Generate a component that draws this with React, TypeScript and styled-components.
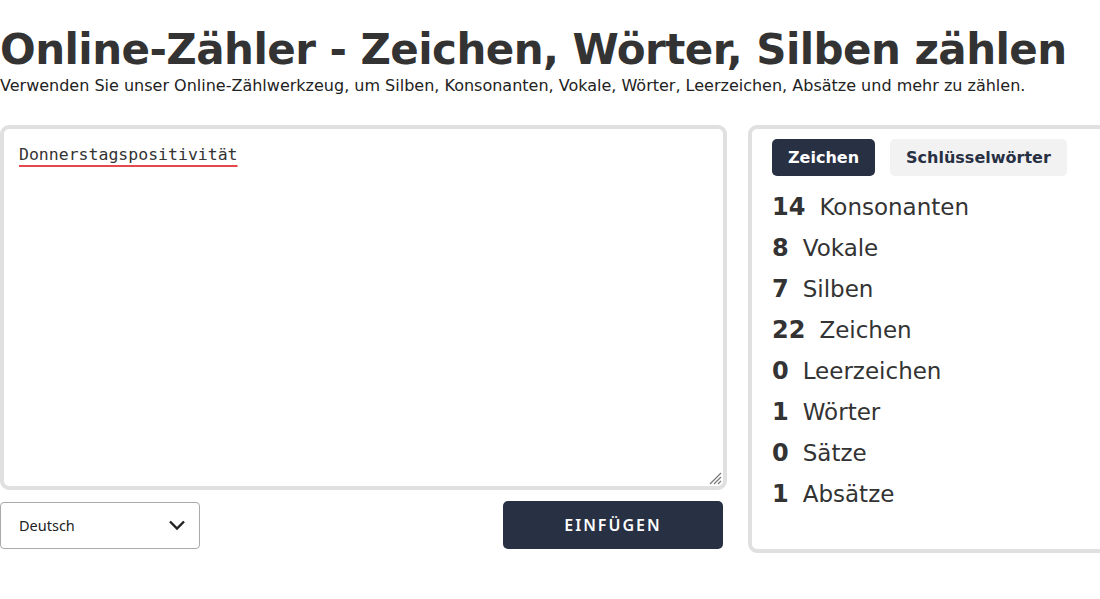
import React from "react";
import styled, { createGlobalStyle } from "styled-components";

const GlobalStyle = createGlobalStyle`
  html, body {
    margin: 0;
    padding: 0;
    background: #fff;
    overflow: hidden;
  }
  body {
    font-family: "DejaVu Sans", sans-serif;
    color: #333;
  }
`;

const stats = [
  { value: 14, label: "Konsonanten" },
  { value: 8, label: "Vokale" },
  { value: 7, label: "Silben" },
  { value: 22, label: "Zeichen" },
  { value: 0, label: "Leerzeichen" },
  { value: 1, label: "Wörter" },
  { value: 0, label: "Sätze" },
  { value: 1, label: "Absätze" },
];

const App = () => {
  return (
    <>
      <GlobalStyle />
      <Page>
        <Header>
          <Title>Online-Zähler - Zeichen, Wörter, Silben zählen</Title>
          <Subtitle>
            Verwenden Sie unser Online-Zählwerkzeug, um Silben, Konsonanten, Vokale, Wörter,
            Leerzeichen, Absätze und mehr zu zählen.
          </Subtitle>
        </Header>
        <Main>
          <LeftColumn>
            <Editor>
              <EditorText>Donnerstagspositivität</EditorText>
              <ResizeHandle viewBox="0 0 16 16">
                <path d="M15 4 L4 15 M15 8 L8 15 M15 12 L12 15" stroke="#777" strokeWidth="1.2" />
              </ResizeHandle>
            </Editor>
            <Controls>
              <Select>
                <span>Deutsch</span>
                <svg width="20" height="20" viewBox="0 0 20 20">
                  <path d="M3 6.5 L10 13.5 L17 6.5" fill="none" stroke="#222" strokeWidth="2.4" />
                </svg>
              </Select>
              <InsertButton>EINFÜGEN</InsertButton>
            </Controls>
          </LeftColumn>
          <StatsPanel>
            <Tabs>
              <Tab $active>Zeichen</Tab>
              <Tab>Schlüsselwörter</Tab>
            </Tabs>
            <StatList>
              {stats.map((s) => (
                <StatRow key={s.label}>
                  <StatValue>{s.value}</StatValue>
                  <StatLabel>{s.label}</StatLabel>
                </StatRow>
              ))}
            </StatList>
          </StatsPanel>
        </Main>
      </Page>
    </>
  );
};

export default App;

const Page = styled.div`
  width: 1100px;
  height: 599px;
  overflow: hidden;
`;

const Header = styled.header`
  padding-top: 26px;
`;

const Title = styled.h1`
  margin: 0;
  font-size: 42px;
  line-height: 48px;
  letter-spacing: -0.55px;
  font-weight: bold;
  color: #333;
  white-space: nowrap;
`;

const Subtitle = styled.p`
  margin: 2px 0 0;
  font-size: 16px;
  line-height: 20px;
  color: #222;
  white-space: nowrap;
`;

const Main = styled.main`
  display: flex;
  gap: 21px;
  margin-top: 29px;
`;

const LeftColumn = styled.div`
  width: 727px;
  flex-shrink: 0;
  display: flex;
  flex-direction: column;
  gap: 11px;
`;

const Editor = styled.div`
  position: relative;
  box-sizing: border-box;
  height: 365px;
  border: 4px solid #e0e0e0;
  border-radius: 9px;
  padding: 16px 15px;
`;

const EditorText = styled.span`
  font-family: "DejaVu Sans Mono", monospace;
  font-size: 16.5px;
  color: #333;
  text-decoration: underline;
  text-decoration-color: #e5484d;
  text-decoration-thickness: 2px;
  text-underline-offset: 5px;
`;

const ResizeHandle = styled.svg`
  position: absolute;
  right: 1px;
  bottom: 1px;
  width: 16px;
  height: 16px;
`;

const Controls = styled.div`
  display: flex;
  justify-content: space-between;
  align-items: center;
  padding-right: 4px;
`;

const Select = styled.div`
  box-sizing: border-box;
  width: 200px;
  height: 47px;
  border: 1px solid #aaa;
  border-radius: 4px;
  display: flex;
  align-items: center;
  justify-content: space-between;
  padding: 0 12px 0 18px;
  font-family: "Noto Sans", sans-serif;
  font-size: 14.5px;
  color: #222;
`;

const InsertButton = styled.button`
  width: 220px;
  height: 48px;
  border: none;
  border-radius: 5px;
  background: #283044;
  color: #fff;
  font-family: "Noto Sans", sans-serif;
  font-size: 16px;
  font-weight: 600;
  letter-spacing: 2px;
`;

const StatsPanel = styled.section`
  box-sizing: border-box;
  flex-shrink: 0;
  width: 380px;
  height: 428px;
  border: 4px solid #e0e0e0;
  border-radius: 9px;
  padding: 10px 20px;
`;

const Tabs = styled.div`
  display: flex;
  gap: 15px;
`;

const Tab = styled.div<{ $active?: boolean }>`
  height: 37px;
  display: flex;
  align-items: center;
  padding: 0 16px;
  border-radius: 5px;
  font-family: "DejaVu Sans", sans-serif;
  font-weight: bold;
  font-size: 16px;
  background: ${(p) => (p.$active ? "#283044" : "#f2f2f2")};
  color: ${(p) => (p.$active ? "#fff" : "#283044")};
`;

const StatList = styled.div`
  margin-top: 11px;
  display: flex;
  flex-direction: column;
`;

const StatRow = styled.div`
  display: flex;
  align-items: baseline;
  gap: 14px;
  height: 41px;
  line-height: 41px;
  font-size: 23px;
`;

const StatValue = styled.span`
  font-weight: bold;
  font-size: 24px;
  color: #333;
`;

const StatLabel = styled.span`
  color: #333;
`;
